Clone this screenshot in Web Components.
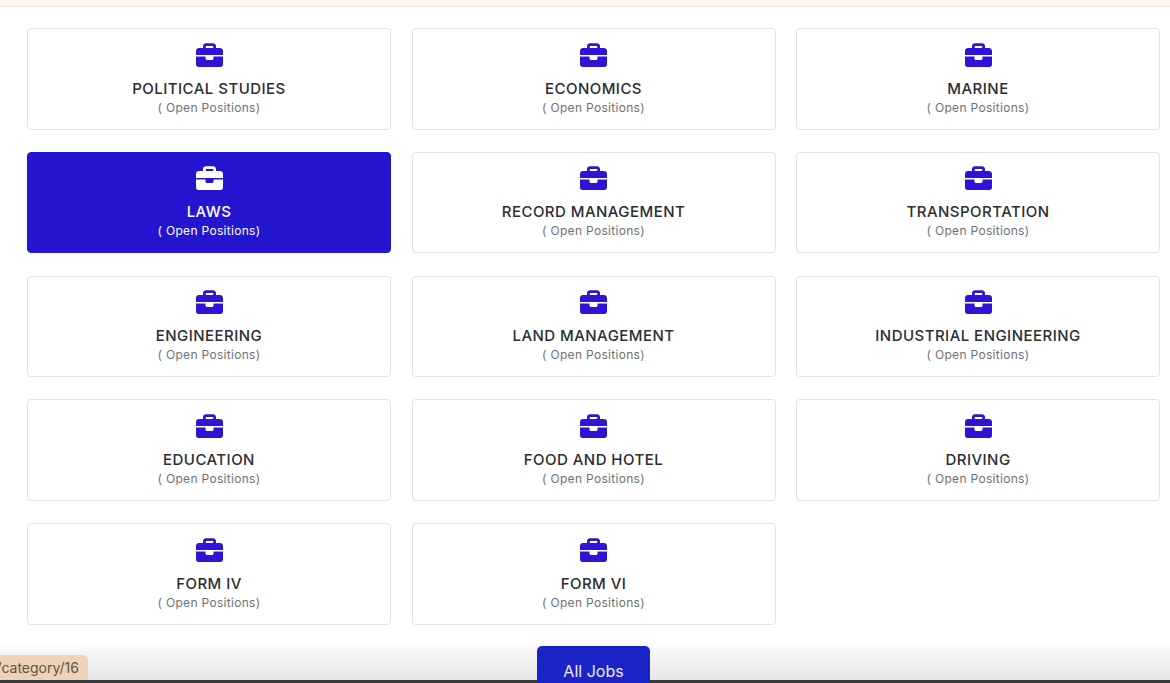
<!DOCTYPE html>
<html lang="en">
<head>
<meta charset="utf-8">
<title>Job categories</title>
<style>
  html, body { margin: 0; height: 683px; overflow: hidden; background: #fff; }
  body { font-family: Inter, "Noto Sans", sans-serif; }
</style>
</head>
<body>
<template id="category-card-tpl">
  <style>
    :host {
      display: flex;
      flex-direction: column;
      align-items: center;
      box-sizing: border-box;
      height: 101.5px;
      padding-top: 13.5px;
      background: #fff;
      border: 1px solid #e3e3e6;
      border-radius: 4px;
      color: #2b2d33;
    }
    :host([active]) {
      background: #2416d0;
      border-color: #2416d0;
      color: #fff;
    }
    svg { display: block; width: 27px; height: 24px; fill: #2f14d8; }
    :host([active]) svg { fill: #fff; }
    .name {
      margin-top: 12.1px;
      font-size: 15px;
      line-height: 20px;
      font-weight: 500;
      letter-spacing: 0.46px;
    }
    .sub {
      margin-top: 1px;
      font-size: 12px;
      line-height: 16px;
      letter-spacing: 0.31px;
      color: #6f7075;
    }
    :host([active]) .sub { color: #fff; }
  </style>
  <svg viewBox="0 0 27 24" aria-hidden="true">
    <path fill-rule="evenodd" d="M7 5V3C7 1.400 8.300.2 10 .2h7c1.700 0 3 1.200 3 2.800v2h4c1.700 0 3 1.300 3 3v4H0V8c0-1.700 1.300-3 3-3h4zM9.800 3V5h7.400V3H9.800z"/>
    <path d="M0 13.500h9.500v2c0 .8.700 1.500 1.500 1.500h5c.8 0 1.500-.7 1.500-1.500v-2H27v8c0 1.400-1.100 2.500-2.500 2.500h-22C1.100 24 0 22.900 0 21.500v-8z"/>
  </svg>
  <div class="name"><slot></slot></div>
  <div class="sub">( Open Positions)</div>
</template>

<template id="category-grid-tpl">
  <style>
    :host {
      display: grid;
      grid-template-columns: repeat(3, 364px);
      column-gap: 20.5px;
      row-gap: 22.25px;
      padding: 21px 0 0 27px;
    }
  </style>
  <slot></slot>
</template>

<template id="top-strip-tpl">
  <style>
    :host {
      display: block;
      height: 6px;
      background: #fdf6f0;
      border-bottom: 1px solid #f8e6d8;
    }
  </style>
</template>

<template id="all-jobs-tpl">
  <style>
    :host {
      position: relative;
      z-index: 2;
      display: block;
      box-sizing: border-box;
      width: 113px;
      height: 40px;
      margin: 21.5px 0 0 537px;
      padding-top: 15px;
      background: #1a24c6;
      border-radius: 5px 5px 0 0;
      color: #e8e9fb;
      font-size: 16px;
      line-height: 20px;
      text-align: center;
    }
  </style>
  <slot></slot>
</template>

<template id="window-edge-tpl">
  <style>
    :host {
      position: absolute;
      left: 0;
      right: 0;
      bottom: 0;
      height: 43px;
      z-index: 1;
      background: linear-gradient(#ffffff00, #e6e6e6 40px, #e6e6e6 40px);
    }
    .bar {
      position: absolute;
      left: 0;
      right: 0;
      bottom: 0;
      height: 3px;
      background: #3a3b3e;
    }
  </style>
  <div class="bar"></div>
</template>

<template id="status-tip-tpl">
  <style>
    :host {
      position: absolute;
      left: 0;
      bottom: 3px;
      z-index: 3;
      display: block;
      box-sizing: border-box;
      width: 88px;
      height: 25px;
      overflow: hidden;
      background: #eed3b8;
      border-radius: 0 5px 0 0;
      color: #5d5347;
      font-size: 14px;
      line-height: 25px;
      white-space: nowrap;
      direction: rtl;
      padding-right: 9px;
    }
  </style>
  <bdi><slot></slot></bdi>
</template>

<top-strip></top-strip>
<category-grid>
  <category-card>POLITICAL STUDIES</category-card>
  <category-card>ECONOMICS</category-card>
  <category-card>MARINE</category-card>
  <category-card active>LAWS</category-card>
  <category-card>RECORD MANAGEMENT</category-card>
  <category-card>TRANSPORTATION</category-card>
  <category-card>ENGINEERING</category-card>
  <category-card>LAND MANAGEMENT</category-card>
  <category-card>INDUSTRIAL ENGINEERING</category-card>
  <category-card>EDUCATION</category-card>
  <category-card>FOOD AND HOTEL</category-card>
  <category-card>DRIVING</category-card>
  <category-card>FORM IV</category-card>
  <category-card>FORM VI</category-card>
</category-grid>
<all-jobs>All Jobs</all-jobs>
<window-edge></window-edge>
<status-tip>/category/16</status-tip>

<script>
  // every element here is just a template stamped into an open shadow root
  const define = (tag) => {
    customElements.define(tag, class extends HTMLElement {
      constructor() {
        super();
        const tpl = document.getElementById(tag + '-tpl');
        this.attachShadow({ mode: 'open' }).appendChild(tpl.content.cloneNode(true));
      }
    });
  };
  ['top-strip', 'category-card', 'category-grid', 'all-jobs', 'window-edge', 'status-tip'].forEach(define);
</script>
</body>
</html>
